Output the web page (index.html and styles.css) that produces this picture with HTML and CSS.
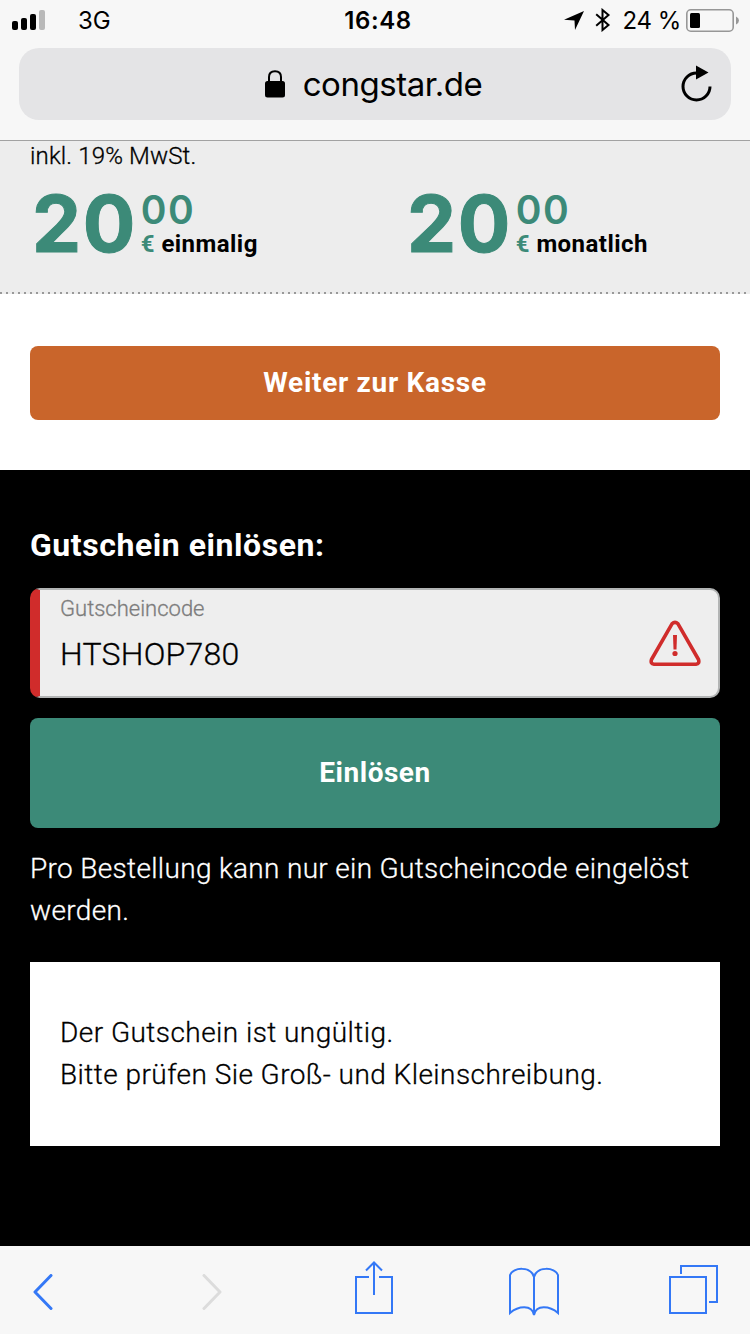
FILE: index.html
```html
<!DOCTYPE html>
<html lang="de">
<head>
  <meta charset="UTF-8">
  <meta name="viewport" content="width=device-width">
  <title>congstar.de</title>
  <link rel="stylesheet" href="styles.css">
</head>
<body>
  <div class="phone">

    <!-- Browser header -->
    <header class="browser-header">
      <div class="status-bar">
        <div class="status-left">
          <svg width="34" height="20" viewBox="0 0 34 20">
            <rect x="0" y="11" width="6" height="9" rx="2"/>
            <rect x="9" y="8" width="6" height="12" rx="2"/>
            <rect x="18" y="4" width="6" height="16" rx="2"/>
            <rect x="27" y="0" width="6" height="20" rx="2" fill="#b9b9b9"/>
          </svg>
          <span class="network">3G</span>
        </div>
        <span class="time">16:48</span>
        <div class="status-right">
          <svg width="20" height="20" viewBox="0 0 20 20">
            <path d="M20 1 L11 20 L10.5 10.5 L0 9.7 Z"/>
          </svg>
          <svg class="bluetooth" width="16" height="24" viewBox="0 0 16 24" fill="none" stroke="#000" stroke-width="2">
            <path d="M1.2 6.2 L13.5 17 L7.5 22 V2 L13.5 7 L1.2 17.8"/>
          </svg>
          <span class="percent">24 %</span>
          <svg class="battery" width="53" height="23" viewBox="0 0 53 23">
            <rect x="0.8" y="0.8" width="46.4" height="21.4" rx="4" fill="none" stroke="#979797" stroke-width="1.6"/>
            <rect x="4" y="4" width="10" height="15" rx="1.5"/>
            <path d="M50 7.5 Q53 9 53 11.5 Q53 14 50 15.5 Z" fill="#979797"/>
          </svg>
        </div>
      </div>
      <div class="address-bar">
        <svg width="20" height="28" viewBox="0 0 20 28">
          <path d="M4 13 V7 Q4 1.2 10 1.2 Q16 1.2 16 7 V13" fill="none" stroke="#000" stroke-width="2"/>
          <rect x="0" y="11" width="20" height="16.5" rx="2.5"/>
        </svg>
        <span class="url">congstar.de</span>
        <svg class="reload" width="32" height="38" viewBox="0 0 32 38">
          <path d="M15.5 8 A13.5 13.5 0 1 0 29 21.5" fill="none" stroke="#000" stroke-width="3"/>
          <path d="M15 0.5 L27.5 7.5 L15 14.5 Z"/>
        </svg>
      </div>
    </header>

    <!-- Prices -->
    <section class="prices">
      <p class="tax">inkl. 19% MwSt.</p>
      <div class="price-row">
        <div class="price">
          <span class="euros">20</span>
          <div class="price-detail">
            <span class="cents">00</span>
            <span class="period"><span class="currency">€</span> einmalig</span>
          </div>
        </div>
        <div class="price">
          <span class="euros">20</span>
          <div class="price-detail">
            <span class="cents">00</span>
            <span class="period"><span class="currency">€</span> monatlich</span>
          </div>
        </div>
      </div>
    </section>

    <section class="checkout">
      <button class="btn btn-checkout">Weiter zur Kasse</button>
    </section>

    <!-- Voucher -->
    <section class="voucher">
      <h2>Gutschein einlösen:</h2>
      <div class="field">
        <div class="field-text">
          <label for="code">Gutscheincode</label>
          <input id="code" type="text" value="HTSHOP780">
        </div>
        <svg width="52" height="46" viewBox="0 0 52 46">
          <path d="M23 3.8 Q26 0.8 29 3.8 L49.5 39.5 Q50.8 43.9 47 44.2 H5 Q1.2 43.9 2.5 39.5 Z" fill="none" stroke="#d02c2b" stroke-width="3.6" stroke-linejoin="round"/>
          <path d="M24 15 H28 L27.5 29.5 H24.5 Z" fill="#d02c2b"/>
          <circle cx="26" cy="33.5" r="2.6" fill="#d02c2b"/>
        </svg>
      </div>
      <button class="btn btn-redeem">Einlösen</button>
      <p class="hint">Pro Bestellung kann nur ein Gutscheincode eingelöst<br>werden.</p>
      <div class="message">
        <p>Der Gutschein ist ungültig.</p>
        <p>Bitte prüfen Sie Groß- und Kleinschreibung.</p>
      </div>
    </section>

    <!-- Browser toolbar -->
    <nav class="toolbar">
      <svg width="20" height="36" viewBox="0 0 20 36">
        <path d="M18 1.5 L2 18 L18 34.5"/>
      </svg>
      <svg class="forward" width="20" height="36" viewBox="0 0 20 36">
        <path d="M2 1.5 L18 18 L2 34.5"/>
      </svg>
      <svg class="thin share" width="38" height="54" viewBox="0 0 38 54">
        <path d="M14 16 H1 V52 H37 V16 H24 M19 34 V2 M11 9.5 L19 1.5 L27 9.5"/>
      </svg>
      <svg class="thin bookmarks" width="50" height="50" viewBox="0 0 50 50">
        <path d="M25 10 C22 -1 4 0 1 8 V46 C9 39 23 37 25 48 C27 37 41 39 49 46 V8 C46 0 28 -1 25 10 V48"/>
      </svg>
      <svg class="thin tabs" width="49" height="49" viewBox="0 0 49 49">
        <path d="M1 12 H37 V48 H1 Z M12 9 V1 H48 V37 H40"/>
      </svg>
    </nav>

  </div>
</body>
</html>
```
FILE: styles.css
```css
* {
  box-sizing: border-box;
}

body {
  margin: 0;
  font-family: Roboto, "Liberation Sans", sans-serif;
  color: #000;
}

p, h2 {
  margin: 0;
}

svg {
  display: block;
  flex-shrink: 0;
}

.phone {
  width: 750px;
  height: 1334px;
  display: flex;
  flex-direction: column;
  overflow: hidden;
}

/* Browser header */
.browser-header {
  height: 141px;
  padding: 0 19px;
  background-color: #f7f7f7;
  border-bottom: 1px solid #a2a2a2;
  font-family: Inter, "Liberation Sans", sans-serif;
}

.status-bar {
  display: grid;
  grid-template-columns: 1fr auto 1fr;
  align-items: center;
  height: 40px;
  margin: 0 -8px 8px -7px;
  font-size: 24px;
}

.status-left, .status-right {
  display: flex;
  align-items: center;
}

.status-right {
  justify-content: flex-end;
}

.network {
  margin-left: 32px;
}

.time {
  padding-left: 5px;
  font-weight: 600;
  letter-spacing: 0.6px;
}

.bluetooth {
  margin-left: 11px;
}

.percent {
  margin-left: 12px;
  letter-spacing: -0.4px;
}

.battery {
  margin-left: 5px;
}

.address-bar {
  position: relative;
  display: flex;
  align-items: center;
  justify-content: center;
  gap: 18px;
  height: 72px;
  padding-right: 3px;
  border-radius: 20px;
  background-color: #e4e4e6;
}

.url {
  font-size: 33px;
  letter-spacing: -0.45px;
}

.reload {
  position: absolute;
  top: 17px;
  right: 18px;
}

/* Prices */
.prices {
  height: 153px;
  padding: 0 30px;
  background-color: #ededed;
  background-image: repeating-linear-gradient(to right, #999 0, #999 2px, transparent 2px, transparent 6px);
  background-size: 100% 2px;
  background-position: bottom;
  background-repeat: no-repeat;
}

.tax, .field-text, .hint, .message {
  font-weight: 300;
  -webkit-text-stroke: 0.3px currentColor;
}

.tax {
  font-size: 24px;
  line-height: 30px;
  letter-spacing: 0.15px;
}

.price-row {
  display: grid;
  grid-template-columns: 375px 1fr;
  margin-top: 20px;
}

.price {
  display: flex;
  padding-left: 2px;
  color: #3c8a78;
  white-space: nowrap;
}

.euros {
  font-family: Inter, sans-serif;
  font-size: 78px;
  font-weight: 700;
  line-height: 66px;
  letter-spacing: 1.5px;
  -webkit-text-stroke: 1px currentColor;
}

.price-detail {
  display: flex;
  flex-direction: column;
  margin-left: 4px;
}

.cents {
  font-family: Inter, sans-serif;
  font-size: 39px;
  font-weight: 600;
  line-height: 38px;
  letter-spacing: 1.5px;
}

.period {
  font-size: 24px;
  font-weight: 700;
  line-height: 30px;
  letter-spacing: 0.45px;
  color: #000;
}

.currency {
  color: #3c8a78;
}

.btn {
  display: block;
  width: 100%;
  padding: 0 0 2px;
  border: none;
  border-radius: 8px;
  font-family: inherit;
  font-size: 28px;
  font-weight: 700;
  color: #fff;
}

.checkout {
  height: 176px;
  padding: 52px 30px 0;
  background-color: #fff;
}

.btn-checkout {
  height: 74px;
  background-color: #c9652b;
  letter-spacing: 0.7px;
}

/* Voucher */
.voucher {
  height: 776px;
  padding: 55px 30px 0;
  background-color: #000;
  color: #fff;
}

.voucher h2 {
  font-size: 32px;
  line-height: 40px;
  letter-spacing: 0.55px;
}

.field {
  display: flex;
  align-items: center;
  justify-content: space-between;
  height: 110px;
  margin-top: 23px;
  padding: 0 17px 0 20px;
  border: 2px solid #b2b4b4;
  border-left: 10px solid #d02c2b;
  border-radius: 10px;
  background-color: #eee;
}

.field-text {
  display: flex;
  flex-direction: column;
  height: 106px;
}

.field-text label {
  margin-top: 5px;
  font-size: 22px;
  line-height: 28px;
  color: #7c7c7c;
}

.field-text input {
  width: 400px;
  height: 40px;
  margin-top: 11px;
  padding: 0;
  border: none;
  outline: none;
  background: none;
  font-family: inherit;
  font-size: 32px;
  font-weight: 300;
  letter-spacing: 0.25px;
  color: #000;
}

.btn-redeem {
  height: 110px;
  margin-top: 20px;
  background-color: #3c8a78;
  letter-spacing: 0.5px;
}

.hint {
  margin-top: 20px;
  font-size: 28px;
  line-height: 42px;
  letter-spacing: 0.33px;
  white-space: nowrap;
}

.message {
  height: 184px;
  margin-top: 30px;
  padding: 50px 30px;
  background-color: #fff;
  color: #000;
  font-size: 28px;
  line-height: 42px;
  letter-spacing: 0.45px;
  white-space: nowrap;
}

/* Browser toolbar */
.toolbar {
  display: flex;
  align-items: center;
  height: 88px;
  padding: 4px 0 0 33px;
  background-color: #f7f7f7;
}

.toolbar svg {
  fill: none;
  stroke: #3478f6;
  stroke-width: 3;
  stroke-linecap: round;
  stroke-linejoin: round;
}

.toolbar .forward {
  margin-left: 149px;
  stroke: #dcdcdc;
}

.toolbar .thin {
  stroke-width: 2;
  stroke-linecap: butt;
  stroke-linejoin: miter;
}

.toolbar .share {
  margin: 0 0 8px 133px;
}

.toolbar .bookmarks {
  margin-left: 116px;
}

.toolbar .tabs {
  margin: 0 0 5px 110px;
}
```
